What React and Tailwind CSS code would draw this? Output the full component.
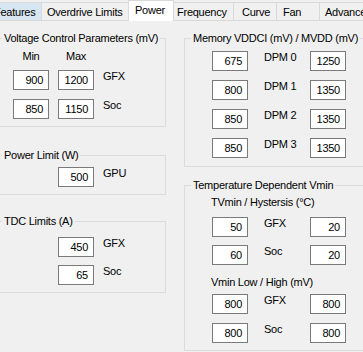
import React from "react";

function Box({ v }) {
  return (
    <div className="w-[36px] h-[20px] border border-[#7a7a7a] bg-white text-right pr-[5px] leading-[18px]">
      {v}
    </div>
  );
}

function Group({ title, className = "", children }) {
  return (
    <div className={"border border-[#dcdcdc] " + className}>
      <div className="-mt-[7px] ml-[6px] w-fit px-[2px] bg-[#f0f0f0] leading-[13px] whitespace-nowrap">
        {title}
      </div>
      {children}
    </div>
  );
}

function TabBar() {
  return (
    <div className="flex items-start h-[21px] border-b border-[#d9d9d9] ml-[-12px] w-[400px]">
      <div className="mt-[2px] h-[18px] w-[54px] shrink-0 border-t border-l border-r border-[#d9d9d9] bg-[#d8e6f2] pl-[5px] pt-[3px] whitespace-nowrap">
        Features
      </div>
      <div className="mt-[2px] h-[18px] w-[86px] shrink-0 border-t border-[#d9d9d9] bg-[#f0f0f0] pl-[5px] pt-[3px] whitespace-nowrap">
        Overdrive Limits
      </div>
      <div className="relative z-10 h-[21px] w-[46px] shrink-0 border-t border-l border-r border-[#d9d9d9] bg-white pl-[6px] pt-[3px] whitespace-nowrap">
        Power
      </div>
      <div className="mt-[2px] h-[18px] w-[60px] shrink-0 border-t border-r border-[#d9d9d9] bg-[#f0f0f0] pl-[3px] pt-[3px] whitespace-nowrap">
        Frequency
      </div>
      <div className="mt-[2px] h-[18px] w-[43px] shrink-0 border-t border-r border-[#d9d9d9] bg-[#f0f0f0] pl-[8px] pt-[3px] whitespace-nowrap">
        Curve
      </div>
      <div className="mt-[2px] h-[18px] w-[43px] shrink-0 border-t border-r border-[#d9d9d9] bg-[#f0f0f0] pl-[6px] pt-[3px] whitespace-nowrap">
        Fan
      </div>
      <div className="mt-[2px] h-[18px] w-[80px] shrink-0 border-t border-r border-[#d9d9d9] bg-[#f0f0f0] pl-[5px] pt-[3px] whitespace-nowrap">
        Advanced
      </div>
    </div>
  );
}

export default function App() {
  return (
    <div className="w-[363px] h-[352px] overflow-hidden bg-[#f0f0f0] text-black text-[11px] leading-[13px] tracking-[-0.25px] font-['Liberation_Sans',Arial,sans-serif]">
      <TabBar />
      <div className="flex items-start">
        {/* Left column */}
        <div className="ml-[-5px] w-[171px] shrink-0 mt-[17px]">
          <Group title="Voltage Control Parameters (mV)">
            <div className="flex pl-[17px] mt-[5px]">
              <div className="w-[36px] text-center">Min</div>
              <div className="w-[36px] ml-[9px] text-center">Max</div>
            </div>
            <div className="grid grid-cols-[36px_36px_auto] gap-x-[9px] gap-y-[9px] pl-[17px] mt-[7px] pb-[7px]">
              <Box v="900" />
              <Box v="1200" />
              <span>GFX</span>
              <Box v="850" />
              <Box v="1150" />
              <span>Soc</span>
            </div>
          </Group>

          <Group title="Power Limit (W)" className="mt-[28px]">
            <div className="grid grid-cols-[36px_auto] gap-x-[9px] pl-[62px] mt-[5px] pb-[7px]">
              <Box v="500" />
              <span>GPU</span>
            </div>
          </Group>

          <Group title="TDC Limits (A)" className="mt-[26px]">
            <div className="grid grid-cols-[36px_auto] gap-x-[9px] gap-y-[8px] pl-[62px] mt-[9px] pb-[7px]">
              <Box v="450" />
              <span>GFX</span>
              <Box v="65" />
              <span>Soc</span>
            </div>
          </Group>
        </div>

        {/* Right column */}
        <div className="ml-[18px] w-[200px] shrink-0 mt-[17px]">
          <Group title="Memory VDDCI (mV) / MVDD (mV)">
            <div className="grid grid-cols-[36px_62px_36px] gap-y-[9px] pl-[27px] mt-[6px] pb-[8px]">
              <Box v="675" />
              <span className="pl-[16px]">DPM 0</span>
              <Box v="1250" />
              <Box v="800" />
              <span className="pl-[16px]">DPM 1</span>
              <Box v="1350" />
              <Box v="850" />
              <span className="pl-[16px]">DPM 2</span>
              <Box v="1350" />
              <Box v="850" />
              <span className="pl-[16px]">DPM 3</span>
              <Box v="1350" />
            </div>
          </Group>

          <Group title="Temperature Dependent Vmin" className="mt-[18px]">
            <div className="pl-[26px] mt-[4px]">TVmin / Hystersis (°C)</div>
            <div className="grid grid-cols-[36px_62px_36px] gap-y-[8px] pl-[27px] mt-[8px]">
              <Box v="50" />
              <span className="pl-[16px]">GFX</span>
              <Box v="20" />
              <Box v="60" />
              <span className="pl-[16px]">Soc</span>
              <Box v="20" />
            </div>
            <div className="pl-[26px] mt-[11px]">Vmin Low / High (mV)</div>
            <div className="grid grid-cols-[36px_62px_36px] gap-y-[9px] pl-[27px] mt-[5px] pb-[7px]">
              <Box v="800" />
              <span className="pl-[16px]">GFX</span>
              <Box v="800" />
              <Box v="800" />
              <span className="pl-[16px]">Soc</span>
              <Box v="800" />
            </div>
          </Group>
        </div>
      </div>
    </div>
  );
}
